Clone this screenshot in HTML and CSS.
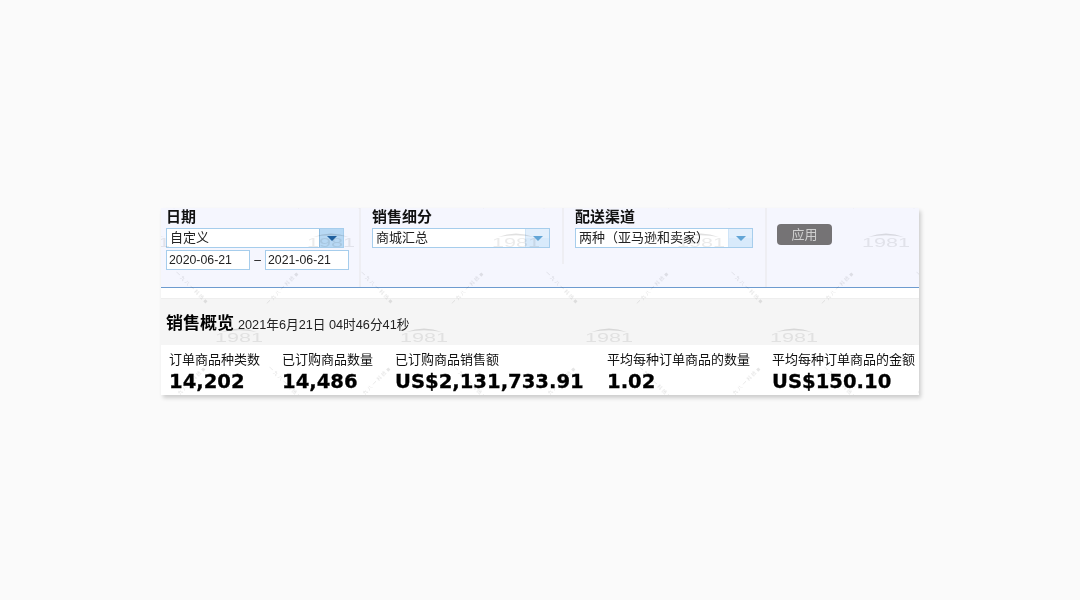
FILE: index.html
```html
<!DOCTYPE html>
<html lang="zh-CN">
<head>
<meta charset="utf-8">
<title>销售概览</title>
<link rel="stylesheet" href="styles.css">
</head>
<body>
<main class="panel">
  <section class="filters">
    <div class="filter filter-date">
      <h3 class="filter-title">日期</h3>
      <div class="select">
        <span class="select-value">自定义</span>
        <span class="select-btn select-btn-active"><i class="caret caret-dark"></i></span>
      </div>
      <div class="dates">
        <span class="date-input">2020-06-21</span>
        <span class="dash">–</span>
        <span class="date-input">2021-06-21</span>
      </div>
    </div>
    <div class="filter filter-mid">
      <h3 class="filter-title">销售细分</h3>
      <div class="select">
        <span class="select-value">商城汇总</span>
        <span class="select-btn"><i class="caret"></i></span>
      </div>
    </div>
    <div class="filter filter-channel">
      <h3 class="filter-title">配送渠道</h3>
      <div class="select">
        <span class="select-value">两种（亚马逊和卖家）</span>
        <span class="select-btn"><i class="caret"></i></span>
      </div>
    </div>
    <div class="filter filter-apply">
      <button class="apply" type="button">应用</button>
    </div>
  </section>
  <div class="spacer"></div>
  <header class="summary-head">
    <h2 class="summary-title">销售概览</h2>
    <span class="summary-time">2021年6月21日 04时46分41秒</span>
  </header>
  <section class="metrics">
    <div class="metric"><div class="metric-label">订单商品种类数</div><div class="metric-value">14,202</div></div>
    <div class="metric"><div class="metric-label">已订购商品数量</div><div class="metric-value">14,486</div></div>
    <div class="metric"><div class="metric-label">已订购商品销售额</div><div class="metric-value">US$2,131,733.91</div></div>
    <div class="metric"><div class="metric-label">平均每种订单商品的数量</div><div class="metric-value">1.02</div></div>
    <div class="metric"><div class="metric-label">平均每种订单商品的金额</div><div class="metric-value">US$150.10</div></div>
  </section>
  <svg class="watermark" width="758" height="187" aria-hidden="true">
    <defs>
      <g id="logo">
        <path d="M6 4 Q24 -3 42 4 Q24 0.5 6 4Z" fill="#e0e0e0"/>
        <text class="wm-logo" x="0" y="14" textLength="48" lengthAdjust="spacingAndGlyphs">1981</text>
      </g>
      <g id="mark">
        <text class="wm-text" x="0" y="0" textLength="38">一九八一科技</text>
        <rect x="40" y="-3" width="3" height="3" fill="#e6e6e6"/>
      </g>
      <pattern id="logos" patternUnits="userSpaceOnUse" x="30" y="0" width="185" height="190">
        <use href="#logo" x="116" y="25"/>
        <use href="#logo" x="24" y="120"/>
      </pattern>
      <pattern id="marks" patternUnits="userSpaceOnUse" x="0" y="-40" width="185" height="190">
        <use href="#mark" transform="translate(14 105) rotate(45)"/>
        <use href="#mark" transform="translate(107 137) rotate(-45)"/>
        <use href="#mark" transform="translate(107 10) rotate(45)"/>
        <use href="#mark" transform="translate(14 42) rotate(-45)"/>
      </pattern>
    </defs>
    <rect width="758" height="187" fill="url(#logos)"/>
    <rect width="758" height="187" fill="url(#marks)"/>
  </svg>
</main>
</body>
</html>
```
FILE: styles.css
```css
* { box-sizing: border-box; }
html, body { margin: 0; height: 100%; }
body {
  background: #fafafa;
  padding: 208px 0 0 161px;
  font-family: "Liberation Sans", "Noto Sans CJK SC", sans-serif;
  color: #111;
}
.panel {
  position: relative;
  width: 758px;
  height: 187px;
  background: #fff;
  box-shadow: 2px 3px 4px rgba(0, 0, 0, 0.18);
}
.filters {
  display: flex;
  height: 80px;
  background: #f5f6fe;
  border-bottom: 1px solid #6d9bcf;
}
.filter {
  height: 79px;
  border-right: 2px solid #eeeef3;
}
.filter-date { width: 200px; padding-left: 5px; }
.filter-mid { width: 203px; padding-left: 11px; height: 56px; }
.filter-channel { width: 203px; padding-left: 11px; }
.filter-apply { flex: 1; border-right: 0; padding: 16px 0 0 10px; }
.filter-title {
  margin: 0;
  height: 20px;
  font-size: 15px;
  line-height: 18px;
  font-weight: 700;
  color: #111;
}
.select {
  display: flex;
  width: 178px;
  height: 20px;
  border: 1px solid #a6cdec;
  background: #fff;
}
.select-value {
  flex: 1;
  padding-left: 3px;
  font-size: 13px;
  line-height: 18px;
  color: #222;
  white-space: nowrap;
}
.select-btn {
  width: 24px;
  display: flex;
  align-items: center;
  justify-content: center;
  background: linear-gradient(#e2effc 50%, #d8eafb 50%);
  border-left: 1px solid #cfe4f7;
}
.select-btn-active {
  background: #b7d8f4;
  border-left: 1px solid #8fbde0;
}
.caret {
  width: 0;
  height: 0;
  border-left: 5px solid transparent;
  border-right: 5px solid transparent;
  border-top: 5px solid #62a5d6;
}
.caret-dark { border-top-color: #1f5f9e; }
.dates {
  display: flex;
  align-items: center;
  margin-top: 2px;
  width: 183px;
}
.date-input {
  width: 84px;
  height: 20px;
  border: 1px solid #a6cdec;
  background: #fff;
  padding-left: 2px;
  font-size: 12.3px;
  line-height: 19px;
  color: #222;
}
.dash { width: 15px; text-align: center; font-size: 12px; }
.apply {
  display: block;
  width: 55px;
  height: 21px;
  padding: 1px 0 0;
  border: 0;
  border-radius: 4px;
  background: #757375;
  color: #cfcfcf;
  font: 13px/20px "Liberation Sans", "Noto Sans CJK SC", sans-serif;
}
.spacer {
  height: 11px;
  background: #fff;
  border-bottom: 1px solid #eeeeee;
}
.summary-head {
  display: flex;
  align-items: baseline;
  height: 46px;
  padding: 14px 0 0 5px;
  background: #f5f5f5;
}
.summary-title {
  margin: 0 4px 0 0;
  font-size: 17px;
  line-height: 22px;
  font-weight: 700;
  color: #000;
}
.summary-time { font-size: 12.7px; color: #222; }
.metrics {
  display: grid;
  grid-template-columns: 113px 113px 212px 165px 1fr;
  padding: 6px 0 0 8px;
  height: 50px;
  background: #fff;
}
.metric { white-space: nowrap; }
.metric-label { font-size: 13px; line-height: 18px; color: #111; }
.metric-value {
  margin-top: 2px;
  font-family: "DejaVu Sans", sans-serif;
  font-weight: 700;
  font-size: 19.6px;
  line-height: 22px;
  color: #000;
  -webkit-text-stroke: 0.3px #000;
}
.watermark {
  position: absolute;
  left: 0;
  top: 0;
  pointer-events: none;
  mix-blend-mode: multiply;
}
.wm-logo {
  font-family: "Liberation Sans", sans-serif;
  font-size: 12px;
  fill: #ebebeb;
}
.wm-text {
  font-family: "Noto Sans CJK SC", sans-serif;
  font-size: 5px;
  fill: #e2e2e2;
}
```
